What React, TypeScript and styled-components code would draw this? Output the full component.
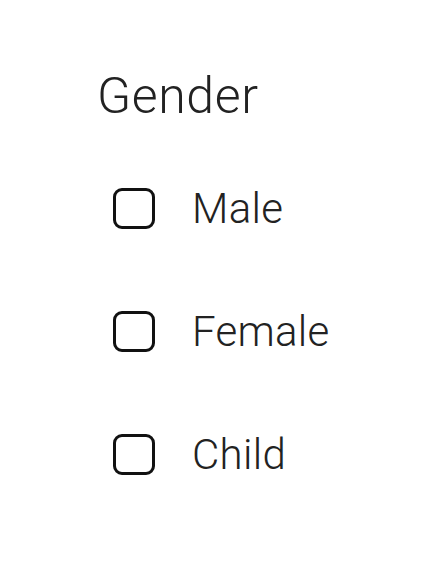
import React from 'react';
import styled, { createGlobalStyle } from 'styled-components';

const GlobalStyle = createGlobalStyle`
  html, body {
    margin: 0;
    padding: 0;
    background: #fff;
  }
  body {
    font-family: Roboto, "Liberation Sans", Arial, sans-serif;
    color: #222;
  }
`;

const Page = styled.div`
  width: 448px;
  min-height: 566px;
  box-sizing: border-box;
  padding: 71px 0 0 97px;
`;

const Title = styled.h2`
  margin: 0;
  font-size: 50px;
  font-weight: 300;
  line-height: 50px;
  letter-spacing: 0.6px;
  color: #222;
`;

const OptionList = styled.div`
  display: flex;
  flex-direction: column;
  gap: 82px;
  margin: 67px 0 0 16px;
`;

const Option = styled.label`
  display: flex;
  align-items: center;
  gap: 37px;
  height: 41px;
  cursor: pointer;
`;

const Box = styled.input.attrs({ type: 'checkbox' })`
  appearance: none;
  margin: 0;
  width: 42px;
  height: 41px;
  box-sizing: border-box;
  border: 3px solid #111;
  border-radius: 9px;
  background: #fff;
  flex-shrink: 0;
`;

const Label = styled.span`
  font-size: 42px;
  font-weight: 300;
  line-height: 41px;
  letter-spacing: 0.3px;
  color: #222;
`;

const options = ['Male', 'Female', 'Child'];

export default function App() {
  return (
    <>
      <GlobalStyle />
      <Page>
        <Title>Gender</Title>
        <OptionList>
          {options.map((name) => (
            <Option key={name}>
              <Box />
              <Label>{name}</Label>
            </Option>
          ))}
        </OptionList>
      </Page>
    </>
  );
}
